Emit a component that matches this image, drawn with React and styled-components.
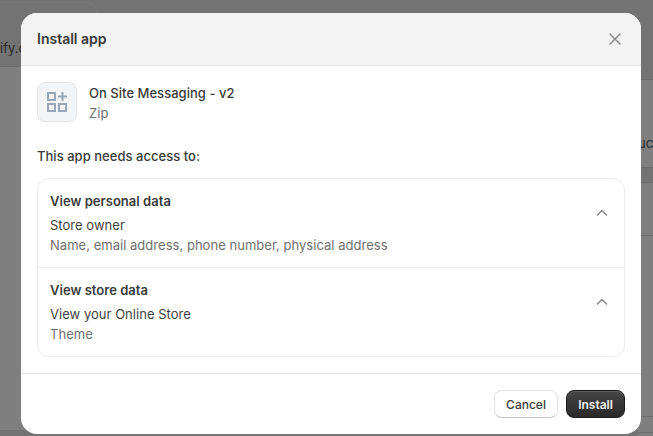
import React from "react";
import styled, { createGlobalStyle } from "styled-components";

const GlobalStyle = createGlobalStyle`
  * { box-sizing: border-box; }
  html, body { margin: 0; padding: 0; height: 100%; }
  body {
    font-family: Inter, "Liberation Sans", sans-serif;
    font-size: 13px;
    color: #3a3a3a;
    overflow: hidden;
  }
`;

const Page = styled.div`
  position: relative;
  width: 653px;
  height: 436px;
  overflow: hidden;
  display: flex;
  background: #7f7f7f;
`;

/* dimmed store admin behind the dialog, only its edges show */
const BehindLeft = styled.div`
  width: 638px;
  flex: none;
  display: flex;
  flex-direction: column;
`;

const BehindRight = styled.div`
  flex: 1;
  min-width: 0;
  display: flex;
  flex-direction: column;
  overflow: hidden;
`;

const BehindTop = styled.div`
  height: 67px;
  flex: none;
  padding-top: 2px;
  background: #737373;
  border-bottom: 1px solid #6c6c6c;
`;

const UrlCard = styled.div`
  width: 97px;
  height: 64px;
  padding-top: 35px;
  border-top: 1px solid #797979;
  border-right: 1px solid #797979;
  border-top-right-radius: 10px;
  font-size: 13px;
  line-height: 20px;
  color: #2a2a2a;
`;

const BehindSpacer = styled.div`
  flex: 1;
`;

const BehindFoot = styled.div`
  height: 6px;
  flex: none;
  background: #737373;
`;

const BehindRow = styled.div`
  height: ${({ $height }) => $height}px;
  flex: none;
  padding-top: ${({ $pad }) => $pad || 0}px;
  background: ${({ $dark }) => ($dark ? "#737373" : "#7f7f7f")};
  border-bottom: 1px solid #6c6c6c;
  font-size: 13px;
  line-height: 20px;
  white-space: nowrap;
  color: #2a2a2a;
`;

const Modal = styled.div`
  position: absolute;
  top: 13px;
  left: 21px;
  width: 620px;
  height: 421px;
  display: flex;
  flex-direction: column;
  background: #fff;
  border-radius: 16px;
  overflow: hidden;
`;

const Header = styled.header`
  height: 53px;
  flex: none;
  display: flex;
  align-items: center;
  justify-content: space-between;
  padding: 0 18px 1px 16px;
  background: #f3f3f3;
  border-bottom: 1px solid #e3e3e3;
`;

const Title = styled.h2`
  margin: 0;
  font-size: 14px;
  font-weight: 600;
  color: #3a3a3a;
`;

const CloseButton = styled.button`
  display: flex;
  padding: 0;
  border: 0;
  background: none;
  color: #8a8a8a;
`;

const Body = styled.div`
  flex: 1;
  padding: 16px 16px 0;
  letter-spacing: 0.03px;
`;

const AppRow = styled.div`
  height: 40px;
  display: flex;
  align-items: flex-start;
  gap: 12px;
`;

const AppIcon = styled.div`
  width: 40px;
  height: 40px;
  display: flex;
  align-items: center;
  justify-content: center;
  background: #f3f4f6;
  border: 1px solid #e3e3e3;
  border-radius: 8px;
  color: #98a6b5;
`;

const AppText = styled.div`
  padding-top: 1px;
`;

const AppName = styled.div`
  font-size: 13px;
  font-weight: 500;
  line-height: 20px;
  color: #3a3a3a;
`;

const Developer = styled.div`
  font-size: 13px;
  line-height: 20px;
  color: #707070;
`;

const AccessHeading = styled.h3`
  margin: 24px 0 12px;
  font-size: 13px;
  font-weight: 500;
  line-height: 20px;
  color: #3a3a3a;
`;

const ScopeList = styled.div`
  border: 1px solid #ebebeb;
  border-radius: 12px;
`;

const Scope = styled.div`
  display: flex;
  align-items: flex-start;
  justify-content: space-between;
  padding: 12px 14px 12px 12px;
  & + & {
    border-top: 1px solid #ebebeb;
  }
`;

const ScopeTitle = styled.div`
  font-size: 13px;
  font-weight: 600;
  line-height: 20px;
  margin-bottom: 4px;
  color: #3a3a3a;
`;

const ScopeLine = styled.div`
  font-size: 13px;
  line-height: 20px;
  color: ${({ $muted }) => ($muted ? "#707070" : "#3f3f3f")};
`;

const Chevron = styled.svg`
  flex: none;
  width: 16px;
  height: 16px;
  margin-top: 14px;
  color: #8a8a8a;
`;

const Footer = styled.footer`
  height: 61px;
  flex: none;
  display: flex;
  align-items: center;
  justify-content: flex-end;
  gap: 8px;
  padding: 0 16px;
  border-top: 1px solid #e3e3e3;
`;

const CancelButton = styled.button`
  height: 28px;
  width: 64px;
  padding: 0;
  font: 500 12px Inter, "Liberation Sans", sans-serif;
  color: #3a3a3a;
  background: #fff;
  border: 1px solid #e3e3e3;
  border-bottom-color: #c4c4c4;
  border-radius: 8px;
`;

const InstallButton = styled.button`
  height: 28px;
  width: 59px;
  padding: 0;
  font: 600 12px Inter, "Liberation Sans", sans-serif;
  color: #f0f0f0;
  background: linear-gradient(#454545, #2a2a2a);
  border: 1px solid #1a1a1a;
  border-radius: 8px;
  box-shadow: inset 0 1px 0 #5f5f5f;
`;

const scopes = [
  {
    title: "View personal data",
    line: "Store owner",
    detail: "Name, email address, phone number, physical address",
  },
  { title: "View store data", line: "View your Online Store", detail: "Theme" },
];

export default function App() {
  return (
    <Page>
      <GlobalStyle />
      <BehindLeft>
        <BehindTop>
          <UrlCard>ify.c</UrlCard>
        </BehindTop>
        <BehindSpacer />
        <BehindFoot />
      </BehindLeft>
      <BehindRight>
        <BehindRow $height={80} $dark />
        <BehindRow $height={88} $pad={53}>uc</BehindRow>
        <BehindRow $height={15} $dark />
        <BehindRow $height={53} />
        <BehindRow $height={181} />
        <BehindRow $height={16} />
      </BehindRight>

      <Modal>
        <Header>
          <Title>Install app</Title>
          <CloseButton aria-label="Close">
            <svg width="16" height="16" viewBox="0 0 16 16" fill="none" stroke="currentColor" strokeWidth="1.5" strokeLinecap="round">
              <path d="M3 3l10 10M13 3L3 13" />
            </svg>
          </CloseButton>
        </Header>

        <Body>
          <AppRow>
            <AppIcon>
              <svg width="20" height="20" viewBox="0 0 20 20" fill="none" stroke="currentColor" strokeWidth="2">
                <rect x="1" y="1" width="7" height="7" />
                <rect x="1" y="12" width="7" height="7" />
                <rect x="12" y="12" width="7" height="7" />
                <path d="M15.5 0v9M11 4.5h9" />
              </svg>
            </AppIcon>
            <AppText>
              <AppName>On Site Messaging - v2</AppName>
              <Developer>Zip</Developer>
            </AppText>
          </AppRow>

          <AccessHeading>This app needs access to:</AccessHeading>

          <ScopeList>
            {scopes.map((scope) => (
              <Scope key={scope.title}>
                <div>
                  <ScopeTitle>{scope.title}</ScopeTitle>
                  <ScopeLine>{scope.line}</ScopeLine>
                  <ScopeLine $muted>{scope.detail}</ScopeLine>
                </div>
                <Chevron viewBox="0 0 16 16" fill="none" stroke="currentColor" strokeWidth="1.5" strokeLinecap="round" strokeLinejoin="round">
                  <path d="M3.5 10L8 5.5 12.5 10" />
                </Chevron>
              </Scope>
            ))}
          </ScopeList>
        </Body>

        <Footer>
          <CancelButton>Cancel</CancelButton>
          <InstallButton>Install</InstallButton>
        </Footer>
      </Modal>
    </Page>
  );
}
